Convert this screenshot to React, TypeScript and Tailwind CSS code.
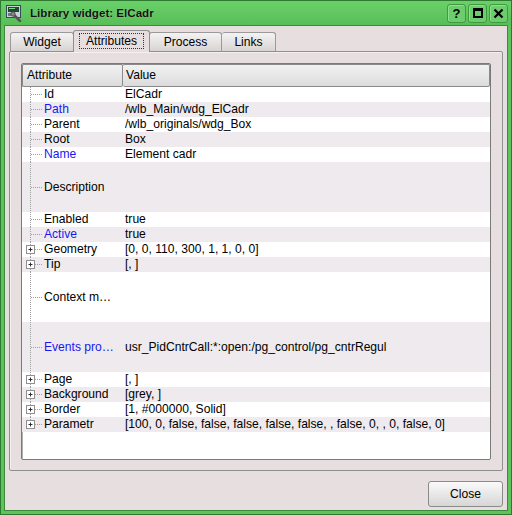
import React from "react";

type Row = { name: string; value: string; h: number; blue?: boolean; plus?: boolean };

const rows: Row[] = [
  { name: "Id", value: "ElCadr", h: 15 },
  { name: "Path", value: "/wlb_Main/wdg_ElCadr", h: 15, blue: true },
  { name: "Parent", value: "/wlb_originals/wdg_Box", h: 15 },
  { name: "Root", value: "Box", h: 15 },
  { name: "Name", value: "Element cadr", h: 15, blue: true },
  { name: "Description", value: "", h: 50 },
  { name: "Enabled", value: "true", h: 15 },
  { name: "Active", value: "true", h: 15, blue: true },
  { name: "Geometry", value: "[0, 0, 110, 300, 1, 1, 0, 0]", h: 15, plus: true },
  { name: "Tip", value: "[, ]", h: 15, plus: true },
  { name: "Context m…", value: "", h: 50 },
  { name: "Events pro…", value: "usr_PidCntrCall:*:open:/pg_control/pg_cntrRegul", h: 50, blue: true },
  { name: "Page", value: "[, ]", h: 15, plus: true },
  { name: "Background", value: "[grey, ]", h: 15, plus: true },
  { name: "Border", value: "[1, #000000, Solid]", h: 15, plus: true },
  { name: "Parametr", value: "[100, 0, false, false, false, false, false, , false, 0, , 0, false, 0]", h: 15, plus: true },
];

function Tree({ h, plus, last }: { h: number; plus?: boolean; last: boolean }) {
  const m = Math.floor(h / 2) + 0.5;
  return (
    <svg width="22" height={h} className="shrink-0">
      <line x1="8.5" y1="0" x2="8.5" y2={last ? m : h} stroke="#a0a0a0" strokeDasharray="1 1" />
      <line x1={plus ? 13 : 9} y1={m} x2="20" y2={m} stroke="#a0a0a0" strokeDasharray="1 1" />
      {plus && (
        <g>
          <rect x="4.5" y={m - 4} width="8" height="8" fill="#fff" stroke="#909090" />
          <line x1="6.5" y1={m} x2="10.5" y2={m} stroke="#303030" />
          <line x1="8.5" y1={m - 2} x2="8.5" y2={m + 2} stroke="#303030" />
        </g>
      )}
    </svg>
  );
}

function TitleIcon() {
  return (
    <svg width="17" height="17" viewBox="0 0 17 17">
      <rect x="0.5" y="0.5" width="14" height="12" fill="#c8d0dc" stroke="#3a4a5a" />
      <rect x="2" y="2" width="11" height="5" fill="#1e4a2a" />
      <rect x="3" y="3" width="6" height="1" fill="#7fdc7f" />
      <rect x="2" y="8" width="4" height="3" fill="#6a7a8a" />
      <path d="M7 9 L14 16" stroke="#555" strokeWidth="2.5" strokeLinecap="round" />
      <circle cx="7" cy="9" r="2.2" fill="#888" stroke="#444" strokeWidth="0.8" />
    </svg>
  );
}

function TitleButton({ children }: { children: React.ReactNode }) {
  return (
    <div className="flex h-[19px] w-[19px] items-center justify-center rounded-[3px] border border-[#3f9a3f] bg-[#6ccd6c] shadow-[inset_1px_1px_0_#8fe08f]">
      {children}
    </div>
  );
}

const tabIdle =
  "flex h-[19px] items-center rounded-t-[3px] border border-b-0 border-[#9a9a9a] bg-gradient-to-b from-[#f4f2f2] to-[#d8d4d4]";

export default function App() {
  return (
    <div
      className="flex h-[515px] w-[512px] flex-col border border-[#2e7a2e] bg-[#5dc35d] text-[12.1px] text-black"
      style={{ fontFamily: '"Liberation Sans", Arial, sans-serif' }}
    >
      {/* title bar */}
      <div className="flex h-[24px] shrink-0 items-center bg-gradient-to-b from-[#6ad06a] to-[#58be58] pl-[5px] pr-[3px]">
        <TitleIcon />
        <span className="ml-[7px] text-[11.6px] font-bold text-[#111] [text-shadow:0_0_1px_#9be89b]">
          Library widget: ElCadr
        </span>
        <div className="ml-auto flex gap-[2px]">
          <TitleButton>
            <span className="text-[13px] font-bold leading-none">?</span>
          </TitleButton>
          <TitleButton>
            <span className="h-[10px] w-[10px] border-2 border-t-[3px] border-black" />
          </TitleButton>
          <TitleButton>
            <svg width="11" height="11" viewBox="0 0 11 11">
              <path d="M1.5 1.5 L9.5 9.5 M9.5 1.5 L1.5 9.5" stroke="#000" strokeWidth="2.2" />
            </svg>
          </TitleButton>
        </div>
      </div>

      {/* body */}
      <div className="mx-[3px] mb-[3px] flex flex-1 flex-col border border-[#3a8a3a] bg-[#e7dfdf] px-[4px] pt-[4px]">
        {/* tabs */}
        <div className="flex items-end pl-[1px]">
          <div className={`${tabIdle} w-[64px] justify-center`}>Widget</div>
          <div className="relative z-10 -mx-[1px] -mb-[1px] flex h-[22px] w-[77px] items-start justify-center rounded-t-[3px] border border-b-0 border-[#8f8f8f] bg-[#e7dfdf] pt-[2px]">
            <span className="border border-dotted border-[#333] px-[6px] leading-[14px]">Attributes</span>
          </div>
          <div className={`${tabIdle} w-[73px] justify-center`}>Process</div>
          <div className={`${tabIdle} w-[54px] justify-center border-l-0`}>Links</div>
        </div>

        {/* tab pane */}
        <div className="flex h-[420px] flex-col rounded-[2px] border border-[#8f8f8f] px-[11px] pb-[10px] pt-[11px] shadow-[inset_1px_1px_0_#f4f0f0]">
          <div className="flex flex-1 flex-col overflow-hidden rounded-[2px] border border-[#7a7a7a] bg-white shadow-[inset_1px_1px_0_#b0b0b0]">
            {/* header */}
            <div className="flex h-[23px] shrink-0">
              <div className="flex w-[101px] items-center rounded-[2px] border border-[#8a8a8a] bg-gradient-to-b from-[#f2f2f2] to-[#dcdcdc] pl-[4px]">
                Attribute
              </div>
              <div className="flex flex-1 items-center rounded-[2px] border border-l-0 border-[#8a8a8a] bg-gradient-to-b from-[#f2f2f2] to-[#dcdcdc] pl-[3px]">
                Value
              </div>
            </div>
            {rows.map((r, i) => (
              <div
                key={r.name}
                className={`flex shrink-0 items-center ${i % 2 === 1 ? "bg-[#eeeaed]" : "bg-white"}`}
                style={{ height: r.h }}
              >
                <div className="flex w-[101px] items-center">
                  <Tree h={r.h} plus={r.plus} last={i === rows.length - 1} />
                  <span className={`whitespace-nowrap ${r.blue ? "text-[#1818f4]" : ""}`}>{r.name}</span>
                </div>
                <span className="whitespace-nowrap pl-[2px]">{r.value}</span>
              </div>
            ))}
          </div>
        </div>

        {/* footer */}
        <div className="flex flex-1 items-end justify-end pb-[3px]">
          <button className="h-[26px] w-[75px] rounded-[3px] border border-[#8a8a8a] bg-gradient-to-b from-[#fafafa] to-[#d6d6d6] text-[12.1px]">
            Close
          </button>
        </div>
      </div>
    </div>
  );
}
